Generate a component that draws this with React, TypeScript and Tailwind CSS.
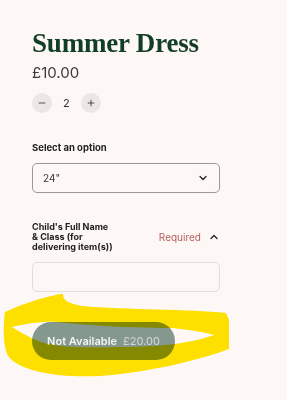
import { ChevronDown, ChevronUp, Minus, Plus } from 'lucide-react';

const Scribble = () => (
  <svg
    className="pointer-events-none absolute left-0 top-0 mix-blend-multiply"
    width="287"
    height="400"
    viewBox="0 0 287 400"
  >
    <path
      fillRule="evenodd"
      fill="#ffe600"
      d="M60 294 L63 294 C63 300 67 303 82 306 C125 310 190 309 226 313 L229 320 L229 349 C200 360 150 372 100 376 C60 378 20 372 8 356 C3 346 3 326 5 312 C20 305 40 298 60 294 Z
         M12 327 C25 324 42 321 56 322 C75 324 120 328 172 328 C190 330 205 332 214 335 C195 342 165 347 120 347 C80 348 50 347 36 340 C25 335 16 330 12 327 Z"
    />
  </svg>
);

export default function App() {
  return (
    <div className="relative h-[400px] w-[287px] overflow-hidden bg-[#fdf8f5] font-['Inter',sans-serif] text-[#2b2b2b]">
      <div className="flex flex-col px-8 pt-[27px]">
        <h1 className="font-['Liberation_Serif',serif] text-[27px] font-bold leading-[32px] tracking-[-0.2px] text-[#123d27]">
          Summer Dress
        </h1>
        <p className="mt-[4px] text-[15px] leading-[20px] text-[#3a3a3a]">£10.00</p>

        <div className="mt-[10px] flex items-center gap-[11px]">
          <button className="flex h-5 w-5 items-center justify-center rounded-full bg-[#ece7e4] text-[#333]">
            <Minus size={10} strokeWidth={2} />
          </button>
          <span className="text-[11px] text-[#333]">2</span>
          <button className="flex h-5 w-5 items-center justify-center rounded-full bg-[#ece7e4] text-[#333]">
            <Plus size={10} strokeWidth={2} />
          </button>
        </div>

        <label className="mt-[29px] text-[9.5px] font-bold leading-[12px] text-[#222]">Select an option</label>
        <div className="mt-[9px] flex h-[30px] w-[188px] items-center justify-between rounded-[5px] border border-[#9b9896] px-[10px]">
          <span className="text-[10px] text-[#3a3a3a]">24"</span>
          <ChevronDown size={12} strokeWidth={2.5} className="text-[#222]" />
        </div>

        <div className="mt-[29px] flex w-[188px] items-center justify-between">
          <span className="w-[84px] text-[9px] font-bold leading-[10px] text-[#222]">
            Child's Full Name &amp; Class (for delivering item(s))
          </span>
          <span className="flex items-center gap-[7px]">
            <span className="text-[10px] text-[#b46060]">Required</span>
            <ChevronUp size={12} strokeWidth={2.5} className="text-[#222]" />
          </span>
        </div>
        <div className="mt-[10px] h-[30px] w-[188px] rounded-[5px] border border-[#e3dedb]" />

        <button className="mt-[30px] flex h-[38px] w-[143px] items-center justify-center gap-[6px] rounded-full bg-[#85988e] text-[11px] font-semibold">
          <span className="text-[#f4f4f2]">Not Available</span>
          <span className="font-normal text-[#d2d8d4]">£20.00</span>
        </button>
      </div>
      <Scribble />
    </div>
  );
}
